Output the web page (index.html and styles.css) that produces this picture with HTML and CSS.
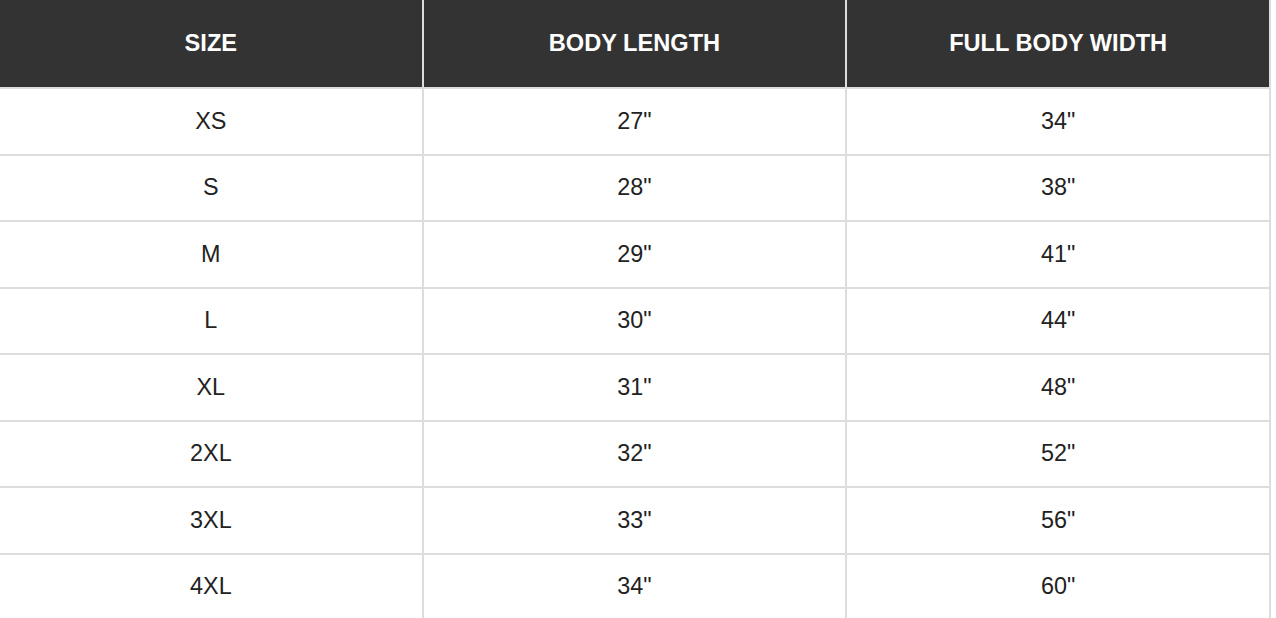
FILE: index.html
```html
<!DOCTYPE html>
<html>
<head>
<meta charset="utf-8">
<link rel="stylesheet" href="styles.css">
</head>
<body>
<table class="size-table">
  <thead>
    <tr class="head-row">
      <th>SIZE</th>
      <th>BODY LENGTH</th>
      <th>FULL BODY WIDTH</th>
    </tr>
  </thead>
  <tbody>
    <tr><td>XS</td><td>27"</td><td>34"</td></tr>
    <tr><td>S</td><td>28"</td><td>38"</td></tr>
    <tr><td>M</td><td>29"</td><td>41"</td></tr>
    <tr><td>L</td><td>30"</td><td>44"</td></tr>
    <tr><td>XL</td><td>31"</td><td>48"</td></tr>
    <tr><td>2XL</td><td>32"</td><td>52"</td></tr>
    <tr><td>3XL</td><td>33"</td><td>56"</td></tr>
    <tr><td>4XL</td><td>34"</td><td>60"</td></tr>
  </tbody>
</table>
</body>
</html>
```
FILE: styles.css
```css
html, body {
  margin: 0;
  padding: 0;
  background: #ffffff;
}
body {
  font-family: "Liberation Sans", Arial, Helvetica, sans-serif;
  overflow: hidden;
}
.size-table {
  border-collapse: separate;
  border-spacing: 0;
  width: 1271px;
  table-layout: fixed;
}
.size-table th,
.size-table td {
  border-right: 2px solid #dddddd;
  border-bottom: 2px solid #dddddd;
  text-align: center;
  vertical-align: middle;
  padding: 0;
}
.size-table th {
  background: #333333;
  color: #ffffff;
  font-weight: bold;
  font-size: 23.6px;
  height: 87px;
  box-sizing: content-box;
}
.size-table td {
  color: #222222;
  font-size: 23.4px;
  height: 64.5px;
  box-sizing: content-box;
}
```
